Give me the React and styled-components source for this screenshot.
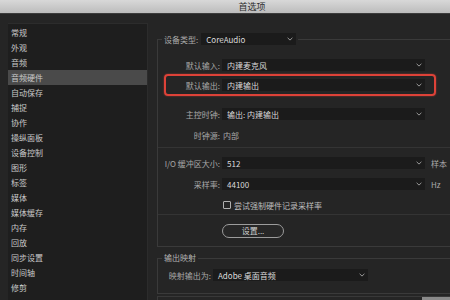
import React from "react";
import styled, { createGlobalStyle } from "styled-components";

const categories = [
  "常规",
  "外观",
  "音频",
  "音频硬件",
  "自动保存",
  "捕捉",
  "协作",
  "操纵面板",
  "设备控制",
  "图形",
  "标签",
  "媒体",
  "媒体缓存",
  "内存",
  "回放",
  "同步设置",
  "时间轴",
  "修剪",
];

function Chevron() {
  return (
    <svg width="6" height="4" viewBox="0 0 6 4">
      <path d="M0.6 0.8 L3 3.1 L5.4 0.8" fill="none" stroke="#a8a8a8" strokeWidth="0.9" />
    </svg>
  );
}

function Select({ value, width }) {
  return (
    <Dropdown $width={width}>
      <span>{value}</span>
      <Chevron />
    </Dropdown>
  );
}

function App() {
  return (
    <>
      <GlobalStyle />
      <Window>
        <TitleBar>首选项</TitleBar>
        <Body>
          <Sidebar>
            {categories.map((name) => (
              <Category key={name} $active={name === "音频硬件"}>
                {name}
              </Category>
            ))}
          </Sidebar>
          <Content>
            <Group>
              <Legend>
                <Label>设备类型:</Label>
                <Select value="CoreAudio" width={95} />
              </Legend>

              <Row $top={14}>
                <Label>默认输入:</Label>
                <Select value="内建麦克风" />
              </Row>
              <Row $top={8} $highlight>
                <Label>默认输出:</Label>
                <Select value="内建输出" />
              </Row>
              <Row $top={17}>
                <Label>主控时钟:</Label>
                <Select value="输出: 内建输出" />
              </Row>
              <Row $top={9}>
                <Label>时钟源:</Label>
                <Value>内部</Value>
              </Row>

              <Divider $top={6} />

              <Row $top={9}>
                <Label>I/O 缓冲区大小:</Label>
                <Select value="512" />
                <Unit>样本</Unit>
              </Row>
              <Row $top={9}>
                <Label>采样率:</Label>
                <Select value="44100" />
                <Unit>Hz</Unit>
              </Row>
              <Row $top={9}>
                <span />
                <CheckLine>
                  <CheckBox />
                  尝试强制硬件记录采样率
                </CheckLine>
              </Row>

              <Divider $top={3} />

              <Row $top={9}>
                <span />
                <PillButton>设置...</PillButton>
              </Row>
            </Group>

            <Group $top={6} $bottom={12}>
              <SmallLegend>输出映射</SmallLegend>
              <Row $top={6} $labelWidth={53}>
                <Label>映射输出为:</Label>
                <Select value="Adobe 桌面音频" width={155} />
              </Row>
            </Group>

            <LowerGroup>
              <Stub />
            </LowerGroup>
          </Content>
        </Body>
      </Window>
    </>
  );
}

export default App;

const GlobalStyle = createGlobalStyle`
  html, body {
    margin: 0;
    padding: 0;
    background: #252525;
    overflow: hidden;
  }
  body {
    font-family: "Noto Sans CJK SC", "Noto Sans", sans-serif;
  }
`;

const Window = styled.div`
  width: 450px;
  height: 300px;
  display: flex;
  flex-direction: column;
  background: #252525;
  overflow: hidden;
`;

const TitleBar = styled.div`
  height: 13px;
  flex-shrink: 0;
  padding-left: 54px;
  display: flex;
  align-items: center;
  justify-content: center;
  background: linear-gradient(#d8d8d8, #bcbcbc);
  border-bottom: 1px solid #3c3c3c;
  color: #2e2e2e;
  font-size: 9px;
  line-height: 13px;
`;

const Body = styled.div`
  flex: 1;
  display: flex;
  min-height: 0;
`;

const Sidebar = styled.div`
  width: 139px;
  margin: 9px 0 0 8px;
  padding-top: 1px;
  background: #1e1e1e;
  border-top: 1px solid #2c2c2c;
  border-right: 1px solid #2c2c2c;
  flex-shrink: 0;
`;

const Category = styled.div`
  height: 15px;
  line-height: 15px;
  padding-left: 3px;
  font-size: 8px;
  color: #c9c9c9;
  background: ${(p) => (p.$active ? "#4a4a4a" : "transparent")};
`;

const Content = styled.div`
  flex: 1;
  margin: 19px 0 0 9px;
  display: flex;
  flex-direction: column;
`;

const Group = styled.fieldset`
  margin: ${(p) => p.$top || 0}px 0 0 0;
  padding: 0 0 ${(p) => p.$bottom ?? 10}px 0;
  min-inline-size: 0;
  border: 1px solid #3a3a3a;
  border-right: none;
`;

const Legend = styled.legend`
  margin-left: 4px;
  padding: 0 2px;
  height: 12px;
  display: flex;
  align-items: center;
  gap: 3px;
`;

const SmallLegend = styled.legend`
  margin-left: 4px;
  padding: 0 2px;
  height: 10px;
  line-height: 10px;
  font-size: 8px;
  color: #b4b4b4;
`;

const Row = styled.div`
  position: relative;
  margin-top: ${(p) => p.$top}px;
  display: grid;
  grid-template-columns: ${(p) => p.$labelWidth || 62}px auto auto 1fr;
  column-gap: 2px;
  align-items: center;
  height: 12px;

  ${(p) =>
    p.$highlight &&
    `
    &::after {
      content: "";
      position: absolute;
      left: 6px;
      top: -5px;
      width: 268px;
      height: 18px;
      border: 2px solid #dd4238;
      border-radius: 4px;
      box-shadow: 0 0 2px rgba(230, 70, 60, 0.6);
    }
  `}
`;

const Label = styled.span`
  justify-self: end;
  white-space: nowrap;
  font-size: 8px;
  color: #a9a9a9;
`;

const Value = styled.span`
  padding-left: 1px;
  font-size: 8px;
  color: #a9a9a9;
`;

const Dropdown = styled.div`
  width: ${(p) => p.$width || 203}px;
  height: 12px;
  box-sizing: border-box;
  padding: 0 3px 0 5px;
  display: flex;
  align-items: center;
  justify-content: space-between;
  background: #1b1b1b;
  font-size: 8px;
  color: #dadada;
  white-space: nowrap;
`;

const Unit = styled.span`
  margin-left: 4px;
  font-size: 8px;
  color: #a9a9a9;
`;

const CheckLine = styled.label`
  grid-column: 2 / span 3;
  display: flex;
  align-items: center;
  gap: 3px;
  padding-left: 1px;
  font-size: 8px;
  color: #bdbdbd;
  white-space: nowrap;
`;

const CheckBox = styled.span`
  width: 8px;
  height: 8px;
  box-sizing: border-box;
  border: 1px solid #b0b0b0;
  border-radius: 1px;
`;

const Divider = styled.div`
  margin-top: ${(p) => p.$top}px;
  height: 1px;
  background: #343434;
`;

const PillButton = styled.button`
  grid-column: 2 / span 3;
  width: 62px;
  height: 14px;
  padding: 0;
  border: 1px solid #9c9c9c;
  border-radius: 7px;
  background: #272727;
  color: #d0d0d0;
  font-family: inherit;
  font-size: 8px;
  line-height: 12px;
`;

const LowerGroup = styled.div`
  margin-top: 2px;
  flex: 1;
  border-top: 1px solid #383838;
  border-left: 1px solid #3a3a3a;
  display: flex;
  justify-content: flex-end;
  align-items: flex-end;
`;

const Stub = styled.div`
  width: 28px;
  height: 4px;
  background: #8a8a8a;
`;
